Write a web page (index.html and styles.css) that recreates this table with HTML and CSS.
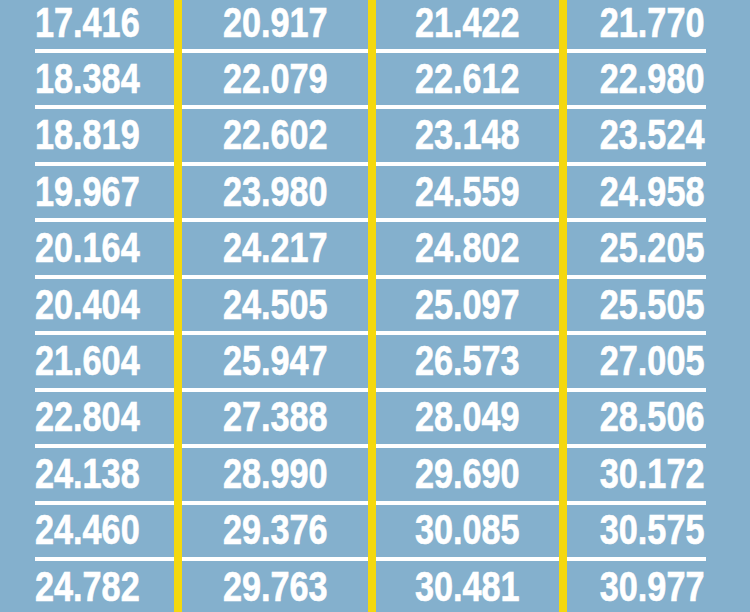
FILE: index.html
```html
<!DOCTYPE html>
<html lang="de">
<head>
<meta charset="utf-8">
<title>Tabelle</title>
<link rel="stylesheet" href="styles.css">
</head>
<body>
<main class="sheet">
  <div class="table">
    <div class="divider d1"></div>
    <div class="divider d2"></div>
    <div class="divider d3"></div>

    <div class="cell c1 first"><span class="num">17.416</span></div><div class="cell c2 first"><span class="num">20.917</span></div><div class="cell c3 first"><span class="num">21.422</span></div><div class="cell c4 first"><span class="num">21.770</span></div>
    <div class="cell c1"><span class="num">18.384</span></div><div class="cell c2"><span class="num">22.079</span></div><div class="cell c3"><span class="num">22.612</span></div><div class="cell c4"><span class="num">22.980</span></div>
    <div class="cell c1"><span class="num">18.819</span></div><div class="cell c2"><span class="num">22.602</span></div><div class="cell c3"><span class="num">23.148</span></div><div class="cell c4"><span class="num">23.524</span></div>
    <div class="cell c1"><span class="num">19.967</span></div><div class="cell c2"><span class="num">23.980</span></div><div class="cell c3"><span class="num">24.559</span></div><div class="cell c4"><span class="num">24.958</span></div>
    <div class="cell c1"><span class="num">20.164</span></div><div class="cell c2"><span class="num">24.217</span></div><div class="cell c3"><span class="num">24.802</span></div><div class="cell c4"><span class="num">25.205</span></div>
    <div class="cell c1"><span class="num">20.404</span></div><div class="cell c2"><span class="num">24.505</span></div><div class="cell c3"><span class="num">25.097</span></div><div class="cell c4"><span class="num">25.505</span></div>
    <div class="cell c1"><span class="num">21.604</span></div><div class="cell c2"><span class="num">25.947</span></div><div class="cell c3"><span class="num">26.573</span></div><div class="cell c4"><span class="num">27.005</span></div>
    <div class="cell c1"><span class="num">22.804</span></div><div class="cell c2"><span class="num">27.388</span></div><div class="cell c3"><span class="num">28.049</span></div><div class="cell c4"><span class="num">28.506</span></div>
    <div class="cell c1"><span class="num">24.138</span></div><div class="cell c2"><span class="num">28.990</span></div><div class="cell c3"><span class="num">29.690</span></div><div class="cell c4"><span class="num">30.172</span></div>
    <div class="cell c1"><span class="num">24.460</span></div><div class="cell c2"><span class="num">29.376</span></div><div class="cell c3"><span class="num">30.085</span></div><div class="cell c4"><span class="num">30.575</span></div>
    <div class="cell c1 last"><span class="num">24.782</span></div><div class="cell c2 last"><span class="num">29.763</span></div><div class="cell c3 last"><span class="num">30.481</span></div><div class="cell c4 last"><span class="num">30.977</span></div>
  </div>
</main>
</body>
</html>
```

FILE: styles.css
```css
html, body {
  margin: 0;
  padding: 0;
}

body {
  background: #84b0cd;
  font-family: "Liberation Sans", "DejaVu Sans", sans-serif;
  color: #ffffff;
}

.sheet {
  width: 750px;
  height: 612px;
  overflow: hidden;
}

.table {
  display: grid;
  grid-template-columns: 139px 8px 186px 8px 183px 8px 139px;
  grid-template-rows: 53px repeat(9, 56.44px) 51px;
  margin-left: 35px;
}

.divider {
  grid-row: 1 / -1;
  background: #f4d80e;
}

.d1 { grid-column: 2; }
.d2 { grid-column: 4; }
.d3 { grid-column: 6; }

.cell {
  box-sizing: border-box;
  border-bottom: 4px solid #ffffff;
  padding-top: 4.8px;
  font-size: 42px;
  font-weight: 700;
  line-height: 42px;
  white-space: nowrap;
}

.cell.first {
  padding-top: 1.5px;
}

.cell.last {
  border-bottom: 0;
}

.num {
  display: inline-block;
  transform: scaleX(0.815);
  -webkit-text-stroke: 0.6px #ffffff;
}

.c1 { text-align: left; }
.c1 .num { transform-origin: left center; }

.c2, .c3 { text-align: center; }
.c2 .num, .c3 .num { transform-origin: center; }

.c4 { text-align: right; padding-right: 2px; }
.c4 .num { transform-origin: right center; }
```
